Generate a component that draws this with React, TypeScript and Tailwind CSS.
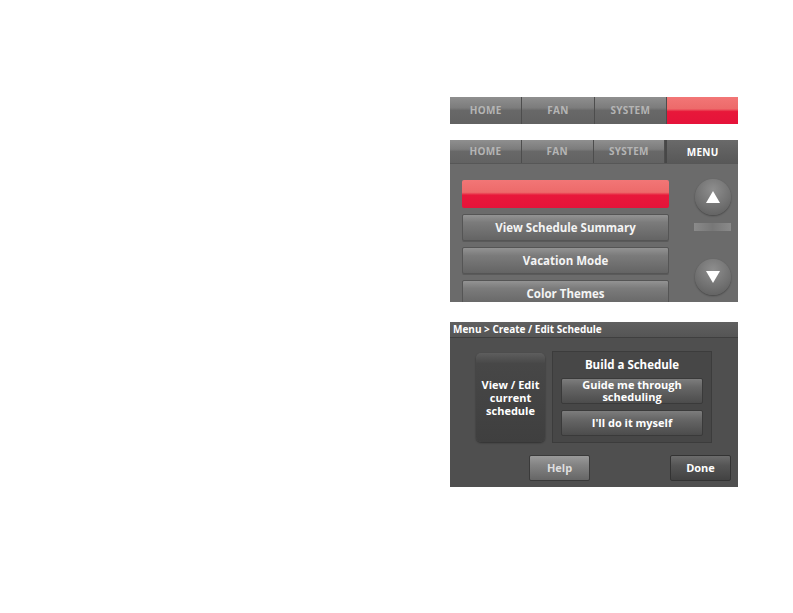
const font = { fontFamily: '"Open Sans", "DejaVu Sans", sans-serif' };

function Tab({ label, active }: { label: string; active?: boolean }) {
  if (active) {
    return (
      <div className="flex flex-1 items-center justify-center border-l-2 border-[#474747] bg-[linear-gradient(to_bottom,#6a6a6a_0%,#606060_50%,#585858_100%)] pt-[2px] text-[10px] font-bold tracking-[0.3px] text-white">
        {label}
      </div>
    );
  }
  return (
    <div className="flex flex-1 items-center justify-center border-r border-[#4d4d4d] bg-[linear-gradient(to_bottom,#8f8f8f_0%,#7c7c7c_40%,#686868_50%,#626262_100%)] text-[10px] font-bold tracking-[0.3px] text-[#b5b5b5]">
      {label}
    </div>
  );
}

function RedBar({ className }: { className: string }) {
  return (
    <div
      className={
        "shrink-0 bg-[linear-gradient(to_bottom,#f27676_0%,#ed6a6a_44%,#e8183a_54%,#e5133a_100%)] " + className
      }
    />
  );
}

function MenuButton({ label }: { label: string }) {
  return (
    <div className="flex h-[27px] w-[207px] shrink-0 items-center justify-center rounded-[2px] border border-[#555] bg-[linear-gradient(to_bottom,#939393_0%,#7b7b7b_30%,#646464_100%)] text-[11.5px] font-bold text-[#f4f4f4] shadow-[0_1px_0_#5a5a5a]">
      {label}
    </div>
  );
}

function Arrow({ up }: { up?: boolean }) {
  return (
    <div className="flex h-[36px] w-[36px] shrink-0 items-center justify-center rounded-full bg-[radial-gradient(circle_at_50%_30%,#8e8e8e_0%,#727272_55%,#5a5a5a_100%)] shadow-[0_1px_2px_rgba(0,0,0,0.35)]">
      <svg width="14" height="12" viewBox="0 0 14 12">
        {up ? <polygon points="7,0 14,12 0,12" fill="#fff" /> : <polygon points="0,0 14,0 7,12" fill="#fff" />}
      </svg>
    </div>
  );
}

function DarkButton({ children, className }: { children: React.ReactNode; className: string }) {
  return (
    <div
      className={
        "flex shrink-0 items-center justify-center rounded-[2px] border border-[#3a3a3a] bg-[linear-gradient(to_bottom,#7d7d7d_0%,#666_35%,#4c4c4c_100%)] text-center text-[11px] leading-[12px] font-bold text-white " +
        className
      }
    >
      {children}
    </div>
  );
}

export default function App() {
  return (
    <div className="flex min-h-[613px] w-full justify-end bg-white pt-[97px] pr-[55px]" style={font}>
      <div className="flex w-[288px] flex-col">
        {/* top tab bar, menu highlighted */}
        <div className="flex h-[27px] shrink-0">
          <Tab label="HOME" />
          <Tab label="FAN" />
          <Tab label="SYSTEM" />
          <RedBar className="w-[71px]" />
        </div>

        {/* menu screen */}
        <div className="mt-[16px] flex h-[162px] shrink-0 flex-col overflow-hidden bg-[#6b6b6b]">
          <div className="flex h-[24px] shrink-0 border-b border-[#575757]">
            <Tab label="HOME" />
            <Tab label="FAN" />
            <Tab label="SYSTEM" />
            <Tab label="MENU" active />
          </div>
          <div className="flex min-h-0 flex-1">
            <div className="flex flex-col gap-[6px] pt-[16px] pl-[12px]">
              <RedBar className="h-[28px] w-[207px] rounded-[2px]" />
              <MenuButton label="View Schedule Summary" />
              <MenuButton label="Vacation Mode" />
              <MenuButton label="Color Themes" />
            </div>
            <div className="mr-[7px] ml-auto flex w-[37px] flex-col items-center pt-[15px]">
              <Arrow up />
              <div className="mt-[8px] h-[8px] w-[37px] shrink-0 bg-[linear-gradient(to_right,#8a8a8a,#777,#8a8a8a)]" />
              <div className="mt-[28px]">
                <Arrow />
              </div>
            </div>
          </div>
        </div>

        {/* create / edit schedule screen */}
        <div className="mt-[20px] flex h-[165px] shrink-0 flex-col bg-[#4f4f4f]">
          <div className="flex h-[16px] shrink-0 items-center border-b border-[#3f3f3f] bg-[linear-gradient(to_bottom,#606060,#555)] pl-[3px] text-[10px] font-bold text-white">
            Menu &gt; Create / Edit Schedule
          </div>
          <div className="flex items-start pt-[13px] pl-[26px]">
            <div className="mt-[2px] flex h-[89px] w-[69px] items-center justify-center rounded-[5px] bg-[linear-gradient(to_bottom,#5e5e5e_0%,#474747_12%,#3f3f3f_100%)] text-center text-[11px] leading-[13px] font-bold text-white shadow-[0_1px_2px_rgba(0,0,0,0.4)]">
              View / Edit
              <br />
              current
              <br />
              schedule
            </div>
            <div className="ml-[7px] flex h-[92px] w-[160px] flex-col items-center border border-[#3c3c3c] bg-[#474747] pt-[6px]">
              <div className="text-[11.5px] leading-[14px] font-bold text-white">Build a Schedule</div>
              <DarkButton className="mt-[6px] h-[26px] w-[142px]">
                Guide me through
                <br />
                scheduling
              </DarkButton>
              <DarkButton className="mt-[6px] h-[26px] w-[142px]">I'll do it myself</DarkButton>
            </div>
          </div>
          <div className="flex pt-[12px] pl-[79px]">
            <div className="flex h-[26px] w-[61px] items-center justify-center rounded-[2px] border border-[#3a3a3a] bg-[linear-gradient(to_bottom,#9a9a9a_0%,#828282_40%,#666_100%)] text-[11px] font-bold text-[#dedede]">
              Help
            </div>
            <div className="ml-[80px] flex h-[26px] w-[61px] items-center justify-center rounded-[2px] border border-[#333] bg-[linear-gradient(to_bottom,#6c6c6c_0%,#555_40%,#424242_100%)] text-[11px] font-bold text-white">
              Done
            </div>
          </div>
        </div>
      </div>
    </div>
  );
}
